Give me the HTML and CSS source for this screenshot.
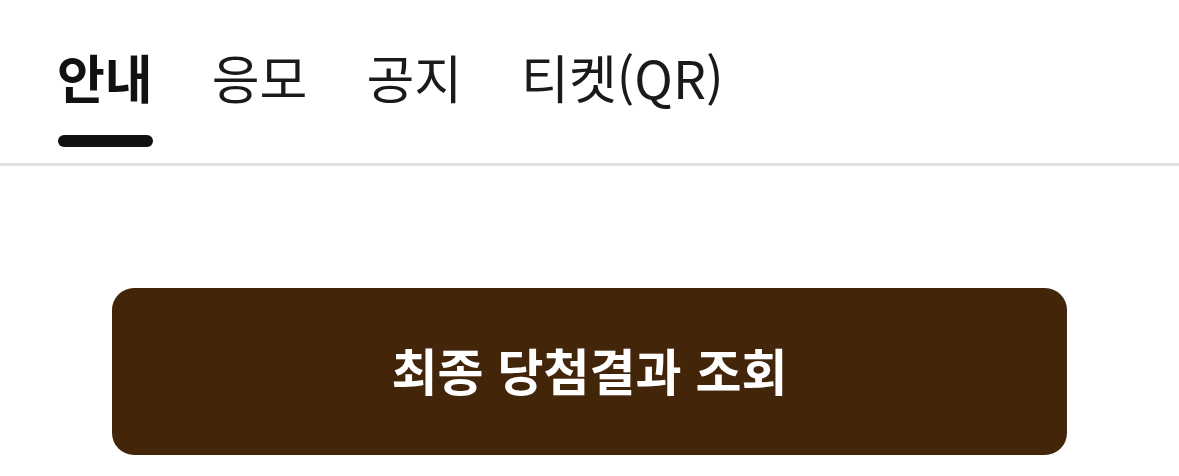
FILE: index.html
```html
<!DOCTYPE html>
<html lang="ko">
<head>
<meta charset="utf-8">
<link rel="stylesheet" href="styles.css">
</head>
<body>
<nav class="tabs">
  <a class="tab active">안내</a>
  <a class="tab">응모</a>
  <a class="tab">공지</a>
  <a class="tab">티켓(QR)</a>
</nav>
<main class="content">
  <button class="cta">최종 당첨결과 조회</button>
</main>
</body>
</html>
```
FILE: styles.css
```css
* { box-sizing: border-box; }
html, body { margin: 0; padding: 0; background: #fff; }
body { font-family: "Noto Sans CJK KR", "Noto Sans", sans-serif; color: #111; }
.tabs {
  display: flex;
  gap: 59px;
  padding: 0 0 0 57px;
  border-bottom: 3px solid #e2e2e2;
  height: 166px;
}
.tab {
  position: relative;
  font-size: 52px;
  line-height: 1;
  padding-top: 51px;
  color: #1a1a1a;
  font-weight: 400;
}
.tab.active { font-weight: 700; color: #111; }
.tab.active::after {
  content: "";
  position: absolute;
  left: 1px; right: 0;
  top: 135px;
  height: 12px;
  border-radius: 6px;
  background: #111114;
}
.content { padding: 122px 112px 0 112px; }
.cta {
  display: block;
  width: 955px;
  height: 167px;
  border: 0;
  border-radius: 22px;
  background: #432609;
  color: #fff;
  font-family: "Noto Sans CJK KR", "Noto Sans", sans-serif;
  font-weight: 700;
  font-size: 50px;
  line-height: 1;
  padding: 0 0 6px 0;
}
```
